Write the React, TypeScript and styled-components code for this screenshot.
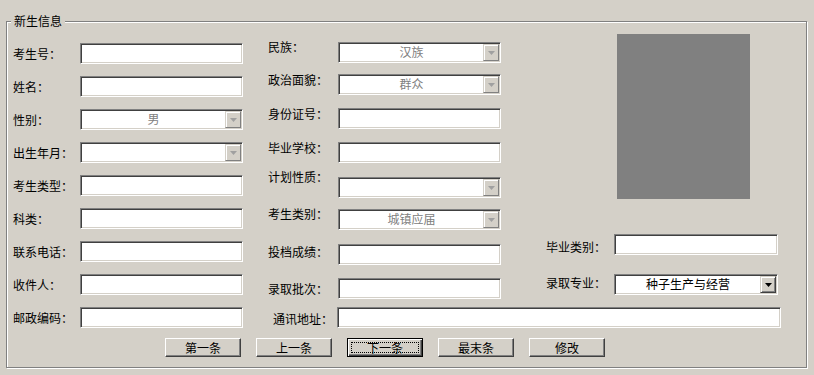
import React from 'react';
import styled, { createGlobalStyle } from 'styled-components';

const GlobalStyle = createGlobalStyle`
  html, body {
    margin: 0;
    padding: 0;
    background: #d4d0c8;
  }
  body {
    font-family: "Noto Sans CJK SC", "Liberation Sans", sans-serif;
    font-size: 12px;
    color: #000;
  }
`;

const Page = styled.div`
  width: 814px;
  height: 375px;
  box-sizing: border-box;
  padding: 21px 0 0 6px;
  background: #d4d0c8;
`;

const Group = styled.div`
  position: relative;
  box-sizing: border-box;
  width: 801px;
  height: 347px;
  border: 1px solid #808080;
  box-shadow: inset 1px 1px 0 #fff, 1px 1px 0 #fff;
`;

const Legend = styled.span`
  position: absolute;
  top: -8px;
  left: 4px;
  padding: 0 3px;
  line-height: 14px;
  background: #d4d0c8;
`;

const Body = styled.div`
  display: flex;
  align-items: flex-start;
`;

const LeftColumn = styled.div`
  display: flex;
  flex-direction: column;
  gap: 12px;
  margin-top: 21px;
  padding-left: 6px;
`;

const RightArea = styled.div`
  display: flex;
  flex-direction: column;
`;

const TopRight = styled.div`
  display: flex;
  align-items: flex-start;
`;

const MiddleColumn = styled.div`
  display: flex;
  flex-direction: column;
  margin-left: 25px;
  margin-top: 20px;
`;

const PhotoColumn = styled.div`
  display: flex;
  flex-direction: column;
  margin-top: 12px;
`;

const Photo = styled.div`
  width: 133px;
  height: 165px;
  margin-left: 116px;
  background: #808080;
`;

const FieldRow = styled.div<{ $mt?: number; $ml?: number; $center?: boolean }>`
  display: flex;
  align-items: ${(p) => (p.$center ? 'center' : 'flex-start')};
  height: 21px;
  margin-top: ${(p) => p.$mt || 0}px;
  margin-left: ${(p) => p.$ml || 0}px;
`;

const Label = styled.span<{ $w: number; $dy?: number }>`
  width: ${(p) => p.$w}px;
  flex: none;
  margin-top: ${(p) => p.$dy || 0}px;
  line-height: 14px;
  white-space: nowrap;
`;

const sunken = `
  box-sizing: border-box;
  height: 21px;
  border: 1px solid;
  border-color: #808080 #fff #fff #808080;
  box-shadow: inset 1px 1px 0 #404040, inset -1px -1px 0 #d4d0c8;
  background: #fff;
`;

const TextBox = styled.div<{ $w: number }>`
  ${sunken}
  width: ${(p) => p.$w}px;
`;

const Combo = styled.div<{ $w: number }>`
  ${sunken}
  width: ${(p) => p.$w}px;
  display: flex;
  padding: 1px;
`;

const ComboValue = styled.span<{ $enabled?: boolean }>`
  flex: 1;
  text-align: center;
  line-height: 15px;
  color: ${(p) => (p.$enabled ? '#000' : '#808080')};
  white-space: nowrap;
`;

const DropButton = styled.span<{ $enabled?: boolean }>`
  box-sizing: border-box;
  width: 16px;
  height: 17px;
  display: flex;
  align-items: center;
  justify-content: center;
  background: #d4d0c8;
  border: 1px solid;
  border-color: #d4d0c8 ${(p) => (p.$enabled ? '#404040' : '#808080')}
    ${(p) => (p.$enabled ? '#404040' : '#808080')} #d4d0c8;
  box-shadow: inset 1px 1px 0 #fff, inset -1px -1px 0 ${(p) => (p.$enabled ? '#808080' : '#d4d0c8')};
`;

const ButtonBar = styled.div`
  display: flex;
  gap: 15px;
  margin-top: 10px;
  padding-left: 158px;
`;

const Button = styled.div<{ $focused?: boolean }>`
  box-sizing: border-box;
  width: 76px;
  height: 19px;
  display: flex;
  align-items: center;
  justify-content: center;
  line-height: 14px;
  background: #d4d0c8;
  border: 1px solid;
  border-color: ${(p) => (p.$focused ? '#000' : '#fff #404040 #404040 #fff')};
  box-shadow: ${(p) =>
    p.$focused
      ? 'inset 1px 1px 0 #fff, inset -1px -1px 0 #404040, inset -2px -2px 0 #808080'
      : 'inset -1px -1px 0 #808080'};
  position: relative;
`;

const FocusRing = styled.span`
  position: absolute;
  inset: 3px;
  border: 1px dotted #000;
`;

type Field = {
  label: string;
  combo?: boolean;
  value?: string;
  enabled?: boolean;
  mt?: number;
  dy?: number;
};

const leftFields: Field[] = [
  { label: '考生号：' },
  { label: '姓名：' },
  { label: '性别：', combo: true, value: '男' },
  { label: '出生年月：', combo: true },
  { label: '考生类型：' },
  { label: '科类：' },
  { label: '联系电话：' },
  { label: '收件人：' },
  { label: '邮政编码：' },
];

const middleFields: Field[] = [
  { label: '民族：', combo: true, value: '汉族', mt: 0, dy: -2 },
  { label: '政治面貌：', combo: true, value: '群众', mt: 11, dy: -1 },
  { label: '身份证号：', mt: 13, dy: -1 },
  { label: '毕业学校：', mt: 13, dy: -1 },
  { label: '计划性质：', combo: true, mt: 14, dy: -7 },
  { label: '考生类别：', combo: true, value: '城镇应届', mt: 11, dy: -2 },
  { label: '投档成绩：', mt: 14, dy: 1 },
  { label: '录取批次：', mt: 13, dy: 4 },
];

const photoFields: Field[] = [
  { label: '毕业类别：', mt: 35, dy: 6 },
  { label: '录取专业：', combo: true, value: '种子生产与经营', enabled: true, mt: 19, dy: 2 },
];

const buttons = ['第一条', '上一条', '下一条', '最末条', '修改'];

function Arrow({ enabled }: { enabled?: boolean }) {
  return (
    <svg width="7" height="4" viewBox="0 0 7 4">
      <polygon points="0,0 7,0 3.5,4" fill={enabled ? '#000' : '#a0a0a0'} />
    </svg>
  );
}

function Control({ field, width }: { field: Field; width: number }) {
  if (!field.combo) {
    return <TextBox $w={width} />;
  }

  return (
    <Combo $w={width}>
      <ComboValue $enabled={field.enabled}>{field.value}</ComboValue>
      <DropButton $enabled={field.enabled}>
        <Arrow enabled={field.enabled} />
      </DropButton>
    </Combo>
  );
}

export default function App() {
  return (
    <Page>
      <GlobalStyle />
      <Group>
        <Legend>新生信息</Legend>
        <Body>
          <LeftColumn>
            {leftFields.map((field) => (
              <FieldRow key={field.label} $center>
                <Label $w={67}>{field.label}</Label>
                <Control field={field} width={163} />
              </FieldRow>
            ))}
          </LeftColumn>
          <RightArea>
            <TopRight>
              <MiddleColumn>
                {middleFields.map((field) => (
                  <FieldRow key={field.label} $mt={field.mt}>
                    <Label $w={70} $dy={field.dy}>{field.label}</Label>
                    <Control field={field} width={163} />
                  </FieldRow>
                ))}
              </MiddleColumn>
              <PhotoColumn>
                <Photo />
                {photoFields.map((field) => (
                  <FieldRow key={field.label} $mt={field.mt} $ml={45}>
                    <Label $w={68} $dy={field.dy}>{field.label}</Label>
                    <Control field={field} width={164} />
                  </FieldRow>
                ))}
              </PhotoColumn>
            </TopRight>
            <FieldRow $mt={8} $ml={30}>
              <Label $w={64} $dy={5}>通讯地址：</Label>
              <TextBox $w={444} />
            </FieldRow>
          </RightArea>
        </Body>
        <ButtonBar>
          {buttons.map((text) => (
            <Button key={text} $focused={text === '下一条'}>
              {text === '下一条' && <FocusRing />}
              {text}
            </Button>
          ))}
        </ButtonBar>
      </Group>
    </Page>
  );
}
